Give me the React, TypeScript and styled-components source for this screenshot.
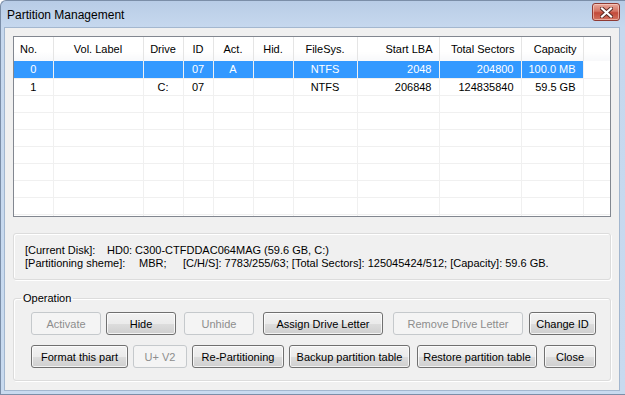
import React from 'react';
import styled, { createGlobalStyle } from 'styled-components';

interface PartitionRow {
  no: string;
  label: string;
  drive: string;
  id: string;
  act: string;
  hid: string;
  fs: string;
  start: string;
  total: string;
  cap: string;
}

interface ColumnDef {
  key: keyof PartitionRow | 'pad';
  title: string;
  width: number;
  head: 'left' | 'center' | 'right';
  cell: 'left' | 'center' | 'right';
}

const columns: ColumnDef[] = [
  { key: 'no', title: 'No.', width: 39, head: 'left', cell: 'center' },
  { key: 'label', title: 'Vol. Label', width: 90, head: 'center', cell: 'center' },
  { key: 'drive', title: 'Drive', width: 40, head: 'center', cell: 'center' },
  { key: 'id', title: 'ID', width: 30, head: 'center', cell: 'center' },
  { key: 'act', title: 'Act.', width: 40, head: 'center', cell: 'center' },
  { key: 'hid', title: 'Hid.', width: 40, head: 'center', cell: 'center' },
  { key: 'fs', title: 'FileSys.', width: 64, head: 'center', cell: 'center' },
  { key: 'start', title: 'Start LBA', width: 82, head: 'right', cell: 'right' },
  { key: 'total', title: 'Total Sectors', width: 82, head: 'right', cell: 'right' },
  { key: 'cap', title: 'Capacity', width: 62, head: 'right', cell: 'right' },
  { key: 'pad', title: '', width: 27, head: 'left', cell: 'left' },
];

const rows: PartitionRow[] = [
  { no: '0', label: '', drive: '', id: '07', act: 'A', hid: '', fs: 'NTFS', start: '2048', total: '204800', cap: '100.0 MB' },
  { no: '1', label: '', drive: 'C:', id: '07', act: '', hid: '', fs: 'NTFS', start: '206848', total: '124835840', cap: '59.5 GB' },
];

const EMPTY_ROWS = 8;

const GlobalStyle = createGlobalStyle`
  html, body {
    margin: 0;
    padding: 0;
    background: #ffffff;
  }
  body {
    font-family: "Liberation Sans", Arial, sans-serif;
    font-size: 11px;
    color: #000;
  }
`;

const Window = styled.div`
  width: 625px;
  height: 395px;
  box-sizing: border-box;
  border: 1px solid #7b8ea8;
  border-right: none;
  border-radius: 6px 0 0 0;
  background: linear-gradient(#b8cce6 0px, #c6d8ee 26px, #c8daef 100%);
  display: flex;
  flex-direction: column;
  padding: 0 5px 3px 3px;
  overflow: hidden;
`;

const TitleBar = styled.div`
  height: 26px;
  display: flex;
  align-items: center;
  justify-content: space-between;
  padding: 0 0 0 3px;
`;

const Title = styled.span`
  font-family: "Liberation Sans", Arial, sans-serif;
  font-size: 12px;
  color: #000;
  margin-top: 1px;
`;

const CloseButton = styled.div`
  width: 28px;
  height: 18px;
  margin-top: -4px;
  box-sizing: border-box;
  border: 1px solid #8f3a33;
  border-radius: 3px;
  background: linear-gradient(#e9a99c 0%, #d47464 45%, #c24a3a 55%, #d2725f 100%);
  box-shadow: inset 0 0 0 1px rgba(255, 220, 210, 0.55);
  display: flex;
  align-items: center;
  justify-content: center;
`;

const Content = styled.div`
  flex: 1;
  background: #f0f0f0;
  border: 1px solid #a3b7cf;
  padding: 8px 8px 0 8px;
  display: flex;
  flex-direction: column;
`;

const ListBox = styled.div`
  height: 181px;
  box-sizing: border-box;
  border: 1px solid #828790;
  background: #fff;
  overflow: hidden;
`;

const Grid = styled.table`
  border-collapse: collapse;
  table-layout: fixed;
  width: 596px;
`;

const HeadCell = styled.th<{ align: string }>`
  height: 24px;
  padding: 0 6px;
  font-weight: normal;
  text-align: ${({ align }) => align};
  white-space: nowrap;
  background: linear-gradient(#ffffff 0%, #ffffff 60%, #f7f8fa 100%);
  border-right: 1px solid #e5e5e5;
  &:last-child {
    border-right: none;
  }
`;

const Row = styled.tr<{ selected?: boolean }>`
  height: 17px;
  background: ${({ selected }) => (selected ? '#3399ff' : '#fff')};
  color: ${({ selected }) => (selected ? '#fff' : '#000')};
`;

const Cell = styled.td<{ align: string; blank?: boolean }>`
  padding: 0 7px;
  height: 16px;
  text-align: ${({ align }) => align};
  white-space: nowrap;
  border-right: 1px solid #f0f0f0;
  border-bottom: 1px solid #f0f0f0;
  background: ${({ blank }) => (blank ? '#fff' : 'inherit')};
  &:last-child {
    border-right: none;
  }
`;

const InfoBox = styled.div`
  margin-top: 16px;
  height: 47px;
  box-sizing: border-box;
  border: 1px solid #dcdcdc;
  box-shadow: inset 1px 1px 0 #fff, 1px 1px 0 #fff;
  border-radius: 3px;
  padding: 10px 11px 0 11px;
  display: flex;
  flex-direction: column;
`;

const InfoLine = styled.div`
  display: flex;
  line-height: 13px;
  white-space: nowrap;
`;

const InfoCell = styled.span<{ w?: number }>`
  ${({ w }) => (w ? `width: ${w}px; flex-shrink: 0;` : '')}
`;

const OperationBox = styled.fieldset`
  margin: 12px 0 0 0;
  height: 89px;
  box-sizing: border-box;
  border: 1px solid #dcdcdc;
  box-shadow: inset 1px 1px 0 #fff, 1px 1px 0 #fff;
  border-radius: 3px;
  padding: 7px 0 0 17px;
  display: flex;
  flex-direction: column;
  gap: 10px;
`;

const Legend = styled.legend`
  padding: 0 2px;
  margin-left: -10px;
  line-height: 13px;
`;

const ButtonRow = styled.div`
  display: flex;
  height: 23px;
`;

const Button = styled.div<{ w: number; ml?: number; disabled?: boolean }>`
  width: ${({ w }) => w}px;
  margin-left: ${({ ml }) => ml ?? 0}px;
  height: 23px;
  box-sizing: border-box;
  border-radius: 3px;
  display: flex;
  align-items: center;
  justify-content: center;
  white-space: nowrap;
  border: 1px solid ${({ disabled }) => (disabled ? '#c5c9cc' : '#707070')};
  color: ${({ disabled }) => (disabled ? '#8d8d8d' : '#000')};
  background: ${({ disabled }) =>
    disabled
      ? '#f4f4f4'
      : 'linear-gradient(#f2f2f2 0%, #ebebeb 50%, #dddddd 51%, #cfcfcf 100%)'};
  box-shadow: ${({ disabled }) => (disabled ? 'none' : 'inset 0 0 0 1px rgba(255,255,255,0.75)')};
`;

const CloseGlyph = () => (
  <svg width="13" height="11" viewBox="0 0 13 11">
    <path d="M2 1.5 L11 9.5 M11 1.5 L2 9.5" stroke="#5a2a24" strokeWidth="4" strokeLinecap="square" />
    <path d="M2 1.5 L11 9.5 M11 1.5 L2 9.5" stroke="#ffffff" strokeWidth="2.2" strokeLinecap="square" />
  </svg>
);

export default function App() {
  const blankRow: PartitionRow = { no: '', label: '', drive: '', id: '', act: '', hid: '', fs: '', start: '', total: '', cap: '' };
  return (
    <>
      <GlobalStyle />
      <Window>
        <TitleBar>
          <Title>Partition Management</Title>
          <CloseButton>
            <CloseGlyph />
          </CloseButton>
        </TitleBar>
        <Content>
          <ListBox>
            <Grid>
              <colgroup>
                {columns.map((c) => (
                  <col key={c.key} style={{ width: c.width }} />
                ))}
              </colgroup>
              <thead>
                <tr>
                  {columns.map((c) => (
                    <HeadCell key={c.key} align={c.head}>
                      {c.title}
                    </HeadCell>
                  ))}
                </tr>
              </thead>
              <tbody>
                {[...rows, ...Array(EMPTY_ROWS).fill(blankRow)].map((r: PartitionRow, i: number) => (
                  <Row key={i} selected={i === 0}>
                    {columns.map((c) => (
                      <Cell key={c.key} align={c.cell} blank={c.key === 'pad'}>
                        {c.key === 'pad' ? '' : r[c.key]}
                      </Cell>
                    ))}
                  </Row>
                ))}
              </tbody>
            </Grid>
          </ListBox>

          <InfoBox>
            <InfoLine>
              <InfoCell w={82}>[Current Disk]:</InfoCell>
              <InfoCell>HD0: C300-CTFDDAC064MAG (59.6 GB, C:)</InfoCell>
            </InfoLine>
            <InfoLine>
              <InfoCell w={114}>[Partitioning sheme]:</InfoCell>
              <InfoCell w={44}>MBR;</InfoCell>
              <InfoCell>[C/H/S]: 7783/255/63; [Total Sectors]: 125045424/512; [Capacity]: 59.6 GB.</InfoCell>
            </InfoLine>
          </InfoBox>

          <OperationBox>
            <Legend>Operation</Legend>
            <ButtonRow>
              <Button w={70} disabled>Activate</Button>
              <Button w={70} ml={5}>Hide</Button>
              <Button w={70} ml={8} disabled>Unhide</Button>
              <Button w={120} ml={9}>Assign Drive Letter</Button>
              <Button w={130} ml={10} disabled>Remove Drive Letter</Button>
              <Button w={67} ml={6}>Change ID</Button>
            </ButtonRow>
            <ButtonRow>
              <Button w={97}>Format this part</Button>
              <Button w={54} ml={5} disabled>U+ V2</Button>
              <Button w={92} ml={5}>Re-Partitioning</Button>
              <Button w={121} ml={5}>Backup partition table</Button>
              <Button w={120} ml={7}>Restore partition table</Button>
              <Button w={52} ml={7}>Close</Button>
            </ButtonRow>
          </OperationBox>
        </Content>
      </Window>
    </>
  );
}
